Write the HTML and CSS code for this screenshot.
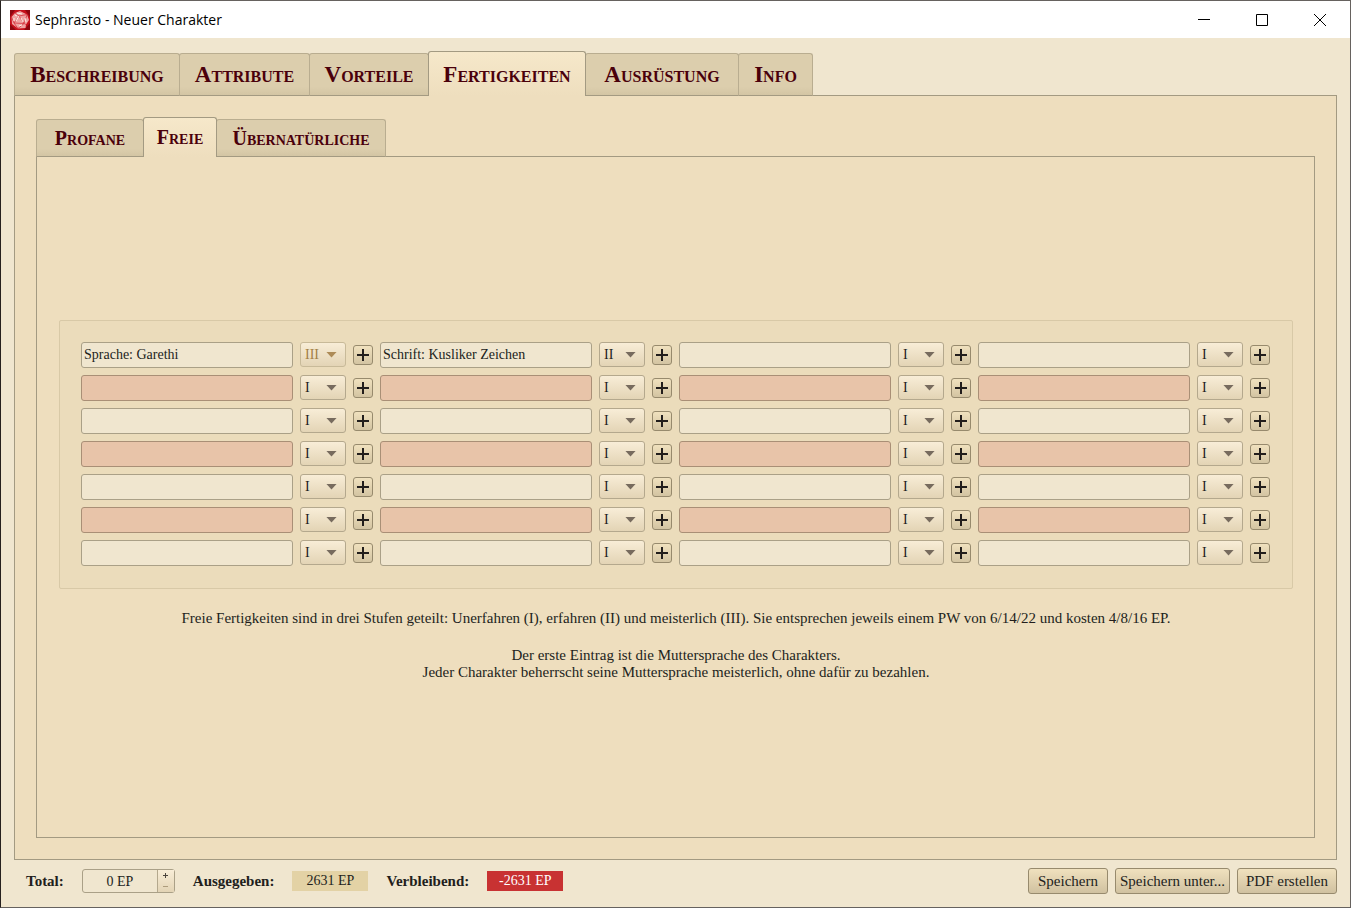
FILE: index.html
```html
<!DOCTYPE html>
<html lang="de">
<head>
<meta charset="utf-8">
<title>Sephrasto - Neuer Charakter</title>
<link rel="stylesheet" href="styles.css">
</head>
<body>
<div class="window">
  <header class="titlebar">
    <svg class="app-icon" viewBox="0 0 20 20" aria-hidden="true">
      <rect width="20" height="20" fill="#c5101c"/>
      <path d="M0 0h5L0 7zM15 0h5v7zM0 14v6h6zM20 13v7h-6z" fill="#8d0710"/>
      <path d="M10 1 17 4.500 19 10 16 14.500 15.500 18 8 18.500 2 14 1.500 7 5 3z" fill="#efa3a3"/>
      <path d="M5 3l4 3 8-1.500M9 6 4 13l10 .5L9 6M4 13l-2.500-6M4 13l4 5.500 6-5 2 1M14 13.500 17 5" fill="none" stroke="#d63540" stroke-width=".8"/>
      <path d="M9 6 6 11M11 8l2 4M5 5l2 1M15 8l1 4M7 3l5 1M4 8v3M9 16l3-1" fill="none" stroke="#fff0e8" stroke-width="1"/>
    </svg>
    <span class="window-title">Sephrasto - Neuer Charakter</span>
    <div class="window-controls">
      <button type="button" aria-label="Minimieren"><svg viewBox="0 0 12 12"><path d="M0 5.500h12"/></svg></button>
      <button type="button" aria-label="Maximieren"><svg viewBox="0 0 12 12"><path d="M.5.5h11v11H.5z"/></svg></button>
      <button type="button" aria-label="Schließen"><svg viewBox="0 0 12 12"><path d="M0 0l12 12M12 0 0 12"/></svg></button>
    </div>
  </header>

  <main class="content">
    <nav class="tabs tabs-main">
      <button type="button" class="tab tab-beschreibung">Beschreibung</button>
      <button type="button" class="tab tab-attribute">Attribute</button>
      <button type="button" class="tab tab-vorteile">Vorteile</button>
      <button type="button" class="tab tab-fertigkeiten active">Fertigkeiten</button>
      <button type="button" class="tab tab-ausruestung">Ausrüstung</button>
      <button type="button" class="tab tab-info">Info</button>
    </nav>
    <section class="panel panel-main">
      <nav class="tabs tabs-sub">
        <button type="button" class="tab tab-profane">Profane</button>
        <button type="button" class="tab tab-freie active">Freie</button>
        <button type="button" class="tab tab-uebernatuerliche">Übernatürliche</button>
      </nav>
      <section class="panel panel-sub">
        <form class="skills" id="skills"></form>
        <div class="notes">
          <p>Freie Fertigkeiten sind in drei Stufen geteilt: Unerfahren (I), erfahren (II) und meisterlich (III). Sie entsprechen jeweils einem PW von 6/14/22 und kosten 4/8/16 EP.</p>
          <p>Der erste Eintrag ist die Muttersprache des Charakters.<br>Jeder Charakter beherrscht seine Muttersprache meisterlich, ohne dafür zu bezahlen.</p>
        </div>
      </section>
    </section>
  </main>

  <footer class="statusbar">
    <label class="caption" for="total">Total:</label>
    <div class="spinbox">
      <input id="total" type="text" value="0 EP">
      <div class="spin-buttons">
        <button type="button" aria-label="Erhöhen"><svg viewBox="0 0 5 5"><path d="M0 2.500h5M2.500 0v5"/></svg></button>
        <button type="button" aria-label="Verringern" disabled><svg viewBox="0 0 5 5"><path d="M0 2.500h5"/></svg></button>
      </div>
    </div>
    <span class="caption">Ausgegeben:</span>
    <output class="amount">2631 EP</output>
    <span class="caption">Verbleibend:</span>
    <output class="amount negative">-2631 EP</output>
    <div class="actions">
      <button type="button" class="button">Speichern</button>
      <button type="button" class="button button-wide">Speichern unter...</button>
      <button type="button" class="button button-pdf">PDF erstellen</button>
    </div>
  </footer>
</div>
<script src="skills.js"></script>
</body>
</html>
```
FILE: skills.js
```js
const ROWS = 7;
const COLUMNS = 4;
const LEVELS = ["I", "II", "III"];
const known = {
  0: { name: "Sprache: Garethi", level: "III", locked: true },
  1: { name: "Schrift: Kusliker Zeichen", level: "II" },
};

function skillCells(index) {
  const skill = known[index] || { name: "", level: "I" };
  const odd = Math.floor(index / COLUMNS) % 2 === 1;
  const options = LEVELS.map(
    (level) => `<option${level === skill.level ? " selected" : ""}>${level}</option>`
  ).join("");
  return `
    <input class="skill-name${odd ? " alternate" : ""}" type="text" value="${skill.name}" aria-label="Fertigkeit ${index + 1}">
    <span class="level"><select aria-label="Stufe ${index + 1}"${skill.locked ? " disabled" : ""}>${options}</select></span>
    <button class="add" type="button" aria-label="Fertigkeit ${index + 1} auswählen"><svg viewBox="0 0 12 12"><path d="M0 6h12M6 0v12"/></svg></button>`;
}

document.getElementById("skills").innerHTML = Array.from(
  { length: ROWS * COLUMNS },
  (_, index) => skillCells(index)
).join("");
```
FILE: styles.css
```css
* { box-sizing: border-box; }

body {
  margin: 0;
  color: #221e1c;
  font: 14px/17px "Liberation Serif", "Times New Roman", serif;
}

button, input, select {
  margin: 0;
  padding: 0;
  color: inherit;
  font: inherit;
}

.window {
  display: flex;
  flex-direction: column;
  min-height: 100vh;
  border: 1px solid #66625f;
  border-left-color: #26211f;
  background: #f0e6cf;
}

.titlebar {
  display: flex;
  align-items: center;
  height: 37px;
  padding: 0 1px 0 9px;
  background: #fff;
  color: #000;
}

.app-icon { width: 20px; height: 20px; }

.window-title {
  margin-left: 5px;
  font: 14px/20px "Open Sans", "Noto Sans", sans-serif;
}

.window-controls { display: flex; margin-left: auto; }

.window-controls button {
  display: grid;
  place-items: center;
  width: 58px;
  height: 36px;
  border: 0;
  background: none;
}

.window-controls svg {
  width: 12px;
  height: 12px;
  fill: none;
  stroke: #000;
}

.content {
  flex: 1;
  display: flex;
  flex-direction: column;
  padding: 13px 13px 0;
}

.tabs {
  display: flex;
  align-items: flex-end;
  position: relative;
  z-index: 1;
  margin-bottom: -1px;
}

.tab {
  height: 43px;
  margin-left: -1px;
  border: 1px solid #b9ad90;
  border-bottom-color: #a39a82;
  border-radius: 3px 3px 0 0;
  background: linear-gradient(#dccead 80%, #d3c5a4);
  color: #4a000b;
  font-family: "Liberation Serif", "Times New Roman", serif;
  font-weight: bold;
  font-size: 23px;
  font-variant: small-caps;
  white-space: nowrap;
}

.tab:first-child { margin-left: 0; }

.tab.active {
  z-index: 1;
  height: 45px;
  border-color: #a39a82;
  border-bottom: 0;
  border-radius: 3px 3px 0 0;
  background: linear-gradient(#f6e8ca, #eedebe);
}

.tabs-sub .tab { height: 38px; font-size: 20px; }
.tabs-sub .tab.active { height: 40px; }

.tab-beschreibung { width: 166px; }
.tab-attribute { width: 131px; }
.tab-vorteile { width: 120px; }
.tab-fertigkeiten { width: 158px; }
.tab-ausruestung { width: 154px; }
.tab-info { width: 75px; }
.tab-profane { width: 108px; }
.tab-freie { width: 74px; }
.tab-uebernatuerliche { width: 170px; }

.panel {
  flex: 1;
  display: flex;
  flex-direction: column;
  border: 1px solid #a39a82;
  background: #eedebe;
}

.panel-main { padding: 21px; }

.panel-sub {
  justify-content: center;
  padding: 6px 21px 0 22px;
}

.skills {
  display: grid;
  grid-template-columns: repeat(4, minmax(0, 1fr) 46px 20px);
  gap: 7px;
  align-items: center;
  padding: 21px 22px 22px 21px;
  border: 1px solid #d8c9a7;
  border-radius: 2px;
  background: #ebdcbb;
}

.skill-name {
  width: 100%;
  height: 26px;
  padding: 0 2px;
  border: 1px solid #aaa087;
  border-radius: 3px;
  background: #f0e6cf;
}

.skill-name.alternate {
  border-color: #a98f76;
  background: #e8c4a9;
}

.level { position: relative; height: 26px; }

.level::after {
  content: "";
  position: absolute;
  top: 10px;
  right: 9px;
  width: 11px;
  height: 6px;
  background: #776b5e;
  clip-path: polygon(0 0, 100% 0, 50% 100%);
  pointer-events: none;
}

.level select {
  appearance: none;
  width: 46px;
  height: 25px;
  padding-left: 4px;
  border: 1px solid #b4a88d;
  border-radius: 3px;
  background: linear-gradient(#f8edd7, #e3d4b5);
}

.level select:disabled {
  border-color: #c8ba99;
  color: #a37f45;
  opacity: 1;
}

.level:has(select:disabled)::after { background: #ad8b57; }

.add {
  display: grid;
  place-items: center;
  width: 20px;
  height: 20px;
  border: 1px solid #978a6d;
  border-radius: 3px;
  background: linear-gradient(#f0e1be, #d3c4a2);
}

.add svg {
  width: 12px;
  height: 12px;
  stroke: #221e1c;
  stroke-width: 2;
}

.notes { padding-top: 21px; font-size: 15px; text-align: center; }
.notes p { margin: 0 0 20px; }
.notes p:last-child { margin: 0; }

.statusbar {
  display: flex;
  align-items: center;
  height: 47px;
  padding: 0 13px 5px 25px;
}

.caption { font-weight: bold; font-size: 15px; }

.spinbox {
  display: flex;
  width: 93px;
  height: 24px;
  margin: 0 18px;
  border: 1px solid #aaa087;
  border-radius: 3px;
}

.spinbox input {
  flex: 1;
  min-width: 0;
  border: 0;
  background: none;
  text-align: center;
}

.spin-buttons {
  display: flex;
  flex-direction: column;
  width: 17px;
  border-left: 1px solid #b4a88d;
  background: linear-gradient(#f8edd7, #e3d4b5);
}

.spin-buttons button {
  flex: 1;
  display: grid;
  place-items: center;
  border: 0;
  background: none;
}

.spin-buttons svg { width: 5px; height: 5px; stroke: #4c453d; }
.spin-buttons button:disabled svg { stroke: #ad9c7c; }

.amount {
  width: 76px;
  margin: 0 18px;
  background: #e3d2a5;
  line-height: 20px;
  text-align: center;
}

.amount.negative { background: #c83232; color: #fff; }

.actions { display: flex; gap: 7px; margin-left: auto; }

.button {
  width: 80px;
  height: 26px;
  border: 1px solid #978a6d;
  border-radius: 3px;
  background: linear-gradient(#f0e1be, #d0c1a0);
  font-size: 15px;
}

.button-wide { width: 115px; }
.button-pdf { width: 100px; }
```
